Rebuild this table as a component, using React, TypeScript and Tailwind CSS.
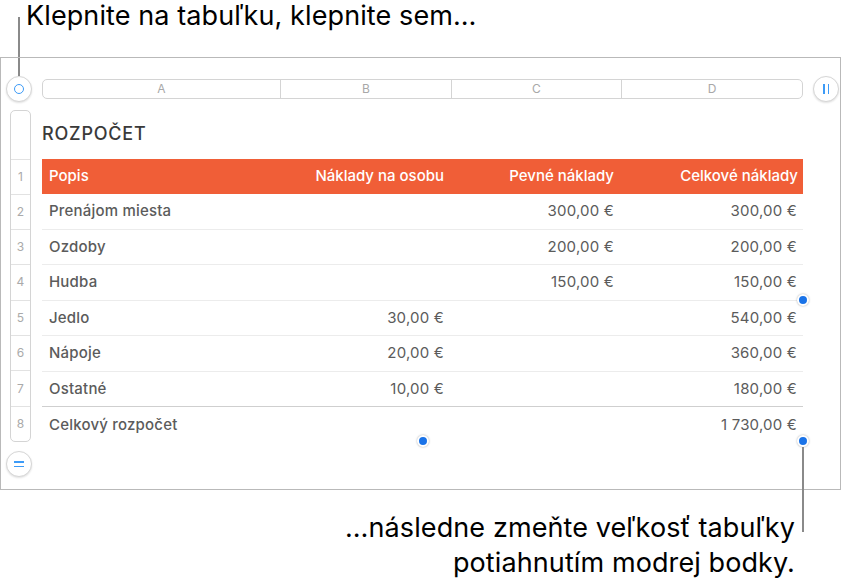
import React from "react";

const rows = [
  { label: "Prenájom miesta", perPerson: "", fixed: "300,00 €", total: "300,00 €" },
  { label: "Ozdoby", perPerson: "", fixed: "200,00 €", total: "200,00 €" },
  { label: "Hudba", perPerson: "", fixed: "150,00 €", total: "150,00 €" },
  { label: "Jedlo", perPerson: "30,00 €", fixed: "", total: "540,00 €" },
  { label: "Nápoje", perPerson: "20,00 €", fixed: "", total: "360,00 €" },
  { label: "Ostatné", perPerson: "10,00 €", fixed: "", total: "180,00 €" },
];

const cols = "grid grid-cols-[237px_171px_170px_183px]";

const HandleDot = ({ className }: { className: string }) => (
  <div
    className={`absolute w-[12px] h-[12px] rounded-full bg-[#1a73e8] border-2 border-white shadow-[0_0_2px_rgba(0,0,0,0.35)] ${className}`}
  />
);

const RoundButton = ({ children }: { children: React.ReactNode }) => (
  <div className="w-[26px] h-[26px] rounded-full bg-white border border-[#d6d6d6] shadow-[0_1px_2px_rgba(0,0,0,0.12)] flex items-center justify-center shrink-0">
    {children}
  </div>
);

export default function App() {
  return (
    <div
      className="relative w-[843px] h-[588px] bg-white text-black overflow-hidden"
      style={{ fontFamily: "Inter, 'Noto Sans', sans-serif" }}
    >
      {/* top caption */}
      <div className="h-[57px] pl-[26px] pt-[1px] text-[27px] leading-[30px] tracking-[0.1px]">
        Klepnite na tabuľku, klepnite sem…
      </div>
      <div className="absolute left-[18px] top-[17px] w-[2px] h-[59px] bg-[#8a8a8a]" />

      {/* table window */}
      <div className="relative w-[841px] h-[433px] border border-[#b9b9b9] pt-[18px]">
        <div className="flex items-center h-[26px] pl-[5px]">
          <RoundButton>
            <div className="w-[10px] h-[10px] rounded-full border-[1.5px] border-[#3d9bf7]" />
          </RoundButton>
          <div className="ml-[10px] w-[761px] h-[20px] rounded-[5px] border border-[#d4d4d4] grid grid-cols-[237px_171px_170px_1fr] text-[12px] text-[#a8a8a8]">
            <div className="flex items-center justify-center">A</div>
            <div className="flex items-center justify-center border-l border-[#d4d4d4]">B</div>
            <div className="flex items-center justify-center border-l border-[#d4d4d4]">C</div>
            <div className="flex items-center justify-center border-l border-[#d4d4d4]">D</div>
          </div>
          <div className="ml-[10px]">
            <RoundButton>
              <div className="flex gap-[3px]">
                <div className="w-[1.5px] h-[10px] bg-[#3d9bf7]" />
                <div className="w-[1.5px] h-[10px] bg-[#3d9bf7]" />
              </div>
            </RoundButton>
          </div>
        </div>

        <div className="flex mt-[8px]">
          {/* row headers */}
          <div className="pl-[5px] w-[41px] flex flex-col">
            <div className="ml-[4px] w-[21px] h-[332px] rounded-[5px] border border-[#d4d4d4] flex flex-col text-[12px] text-[#aaaaaa]">
              <div className="h-[48px]" />
              {[1, 2, 3, 4, 5, 6, 7, 8].map((n) => (
                <div
                  key={n}
                  className={`flex items-center justify-center border-t border-[#e2e2e2] ${n === 1 ? "h-[35px]" : "h-[35.5px]"}`}
                >
                  {n}
                </div>
              ))}
            </div>
            <div className="mt-[9px]">
              <RoundButton>
                <div className="flex flex-col gap-[3px]">
                  <div className="w-[10px] h-[1.5px] bg-[#3d9bf7]" />
                  <div className="w-[10px] h-[1.5px] bg-[#3d9bf7]" />
                </div>
              </RoundButton>
            </div>
          </div>

          {/* table */}
          <div className="w-[761px]">
            <div className="h-[49px] pt-[12px] text-[18px] leading-[24px] font-medium text-[#3a3a3a] tracking-[0.8px]">
              ROZPOČET
            </div>
            <div className={`${cols} h-[35px] bg-[#f05e37] text-white text-[15px] font-medium items-center`}>
              <div className="pl-[7px]">Popis</div>
              <div className="text-right pr-[6px]">Náklady na osobu</div>
              <div className="text-right pr-[6px]">Pevné náklady</div>
              <div className="text-right pr-[5px]">Celkové náklady</div>
            </div>
            {rows.map((r, i) => (
              <div
                key={r.label}
                className={`${cols} h-[35.5px] items-center text-[15px] tracking-[0.2px] text-[#5b5b5b] border-b ${i === rows.length - 1 ? "border-[#cfcfcf]" : "border-[#ececec]"}`}
              >
                <div className="pl-[7px] font-medium">{r.label}</div>
                <div className="text-right pr-[6px]">{r.perPerson}</div>
                <div className="text-right pr-[6px]">{r.fixed}</div>
                <div className="text-right pr-[6px]">{r.total}</div>
              </div>
            ))}
            <div className={`${cols} h-[35.5px] items-center text-[15px] tracking-[0.2px] text-[#5b5b5b]`}>
              <div className="pl-[7px] font-medium">Celkový rozpočet</div>
              <div />
              <div />
              <div className="text-right pr-[6px]">1 730,00 €</div>
            </div>
          </div>
        </div>

        <HandleDot className="left-[796px] top-[236px]" />
        <HandleDot className="left-[416px] top-[377px]" />
        <HandleDot className="left-[796px] top-[377px]" />
      </div>

      {/* bottom caption */}
      <div className="absolute left-[802px] top-[447px] w-[2px] h-[85px] bg-[#8a8a8a]" />
      <div className="pr-[48px] pt-[20px] text-right text-[27px] leading-[35px] tracking-[0.1px]">
        <div>…následne zmeňte veľkosť tabuľky</div>
        <div>potiahnutím modrej bodky.</div>
      </div>
    </div>
  );
}
